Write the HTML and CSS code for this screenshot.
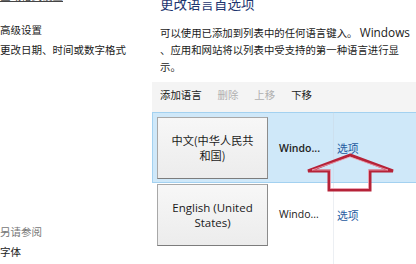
FILE: index.html
```html
<!DOCTYPE html>
<html lang="zh-CN">
<head>
<meta charset="utf-8">
<link rel="stylesheet" href="styles.css">
</head>
<body>
<div class="page">
  <aside class="side">
    <div class="cut">区域格式设置</div>
    <div class="side-link s1">高级设置</div>
    <div class="side-link s2">更改日期、时间或数字格式</div>
    <div class="spacer"></div>
    <div class="see">另请参阅</div>
    <div class="side-link s3">字体</div>
  </aside>
  <main class="main">
    <h1 class="title">更改语言首选项</h1>
    <p class="desc">
      <span class="ln">可以使用已添加到列表中的任何语言键入。 <span class="latin">Windows</span></span>
      <span class="ln">、应用和网站将以列表中受支持的第一种语言进行显</span>
      <span class="ln">示。</span>
    </p>
    <div class="toolbar">
      <span class="tb">添加语言</span>
      <span class="tb off">删除</span>
      <span class="tb off">上移</span>
      <span class="tb">下移</span>
    </div>
    <div class="list">
      <div class="row sel">
        <div class="lang"><span>中文(中华人民共<br>和国)</span></div>
        <div class="kb strong">Windo...</div>
        <div class="opt">选项</div>
      </div>
      <div class="row">
        <div class="lang en"><span>English (United<br>States)</span></div>
        <div class="kb">Windo...</div>
        <div class="opt">选项</div>
      </div>
      <div class="vline"></div>
    </div>
  </main>
  <svg class="arrow" width="416" height="264" viewBox="0 0 416 264">
    <polygon points="350,155 393,171 370,171 370,190 329,190 329,171 308,171" fill="none" stroke="#b62238" stroke-width="3" stroke-linejoin="miter"/>
    <polygon points="350,157 388,170 368.5,170 368.5,188.5 330.5,188.5 330.5,170 312,170" fill="none" stroke="#f0a8b8" stroke-width="0.8"/>
  </svg>
</div>
</body>
</html>
```
FILE: styles.css
```css
* { box-sizing: border-box; }
html, body { margin: 0; padding: 0; background: #fff; }
body {
  width: 416px; height: 264px; overflow: hidden;
  font-family: "Noto Sans CJK SC", "Noto Sans", sans-serif;
  color: #1a1a1a;
}
.page {
  position: relative;
  width: 416px; height: 264px;
  display: grid;
  grid-template-columns: 152px 1fr;
  overflow: hidden;
}
.side {
  display: flex; flex-direction: column;
  font-size: 10.5px;
  line-height: 16px;
}
.cut {
  margin-top: -12px;
  color: #444;
  font-size: 10.5px;
  line-height: 16px;
  text-decoration: underline;
  white-space: nowrap;
}
.side-link { color: #1a1a1a; white-space: nowrap; }
.s1 { margin-top: 18px; }
.s2 { margin-top: 4px; }
.spacer { flex: 1; }
.see { color: #777; }
.s3 { margin-top: 4px; margin-bottom: 4px; }

.main { display: flex; flex-direction: column; min-width: 0; position: relative; }
.title {
  margin: -7px 0 0 8px;
  font-size: 13.5px; font-weight: normal;
  line-height: 20px;
  color: #1d3570;
  white-space: nowrap;
}
.desc {
  margin: 11px 0 0 8px;
  font-size: 10.4px;
  line-height: 17px;
  color: #1a1a1a;
}
.latin { font-family: "Open Sans", "Noto Sans", sans-serif; font-size: 11.8px; }
.ln { display: block; white-space: nowrap; }
.toolbar {
  margin-top: 7px;
  height: 30px;
  background: #f4f4f4;
  display: flex;
  gap: 16px;
  padding: 5px 0 0 8px;
  font-size: 10.4px;
  line-height: 16px;
}
.tb { color: #1a1a1a; }
.tb.off { color: #b0b0b0; }
.list { position: relative; }
.row {
  display: flex;
  align-items: center;
  height: 67px;
  padding-left: 5px;
}
.row.sel {
  height: 71px;
  background: #cfe8f9;
  border: 1px solid #a3d1f0;
  border-right: none;
  padding-left: 4px;
}
.lang {
  width: 111px; height: 62px;
  display: flex; align-items: center; justify-content: center;
  text-align: center;
  background: linear-gradient(#f7f7f7, #ececec);
  border: 1px solid #a8a8a8;
  border-right-color: #8c8c8c;
  border-bottom-color: #7c7c7c;
  font-size: 11.2px;
  line-height: 15px;
  color: #1a1a1a;
}
.row:not(.sel) { align-items: flex-start; padding-top: 1px; }
.row:not(.sel) .kb, .row:not(.sel) .opt { margin-top: 23px; }
.lang.en { font-family: "Open Sans", "Noto Sans", sans-serif; font-size: 11.5px; line-height: 15px; }
.kb {
  margin-left: 11px;
  width: 55px;
  font-family: "Open Sans", "Noto Sans", sans-serif;
  font-size: 10.5px;
  color: #222;
}
.kb.strong { font-weight: 600; }
.opt {
  margin-left: 3px;
  font-size: 10.8px;
  color: #1e5aa0;
}
.vline {
  position: absolute;
  left: 181px; top: 0;
  width: 1px; height: 160px;
  background: rgba(200, 210, 220, 0.35);
}
.arrow { position: absolute; left: 0; top: 0; pointer-events: none; }
```
